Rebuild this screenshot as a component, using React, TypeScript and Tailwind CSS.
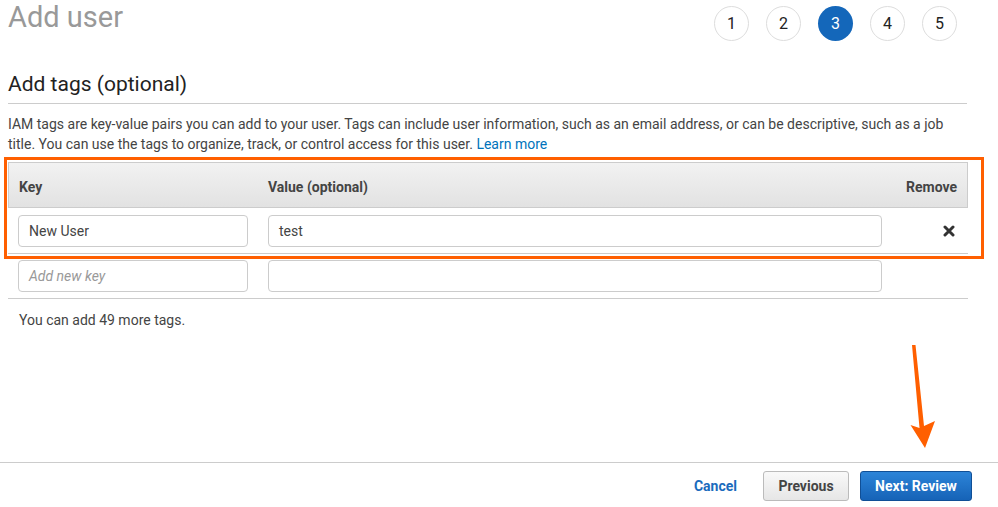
import React from "react";

const steps = [1, 2, 3, 4, 5];

export default function App() {
  return (
    <div
      className="relative w-[998px] h-[507px] overflow-hidden bg-white text-[#444]"
      style={{ fontFamily: "Roboto, 'Helvetica Neue', Arial, sans-serif" }}
    >
      <div className="pl-[8px] w-[967px]">
        {/* Title row */}
        <div className="flex items-start justify-between h-[41px]">
          <h1 className="text-[29px] leading-[30px] mt-[2px] text-[#999] font-normal">Add user</h1>
          <div className="flex gap-[17px] mt-[6px] mr-[10px]">
            {steps.map((s) =>
              s === 3 ? (
                <div
                  key={s}
                  className="w-[35px] h-[35px] rounded-full bg-[#1467ba] text-white flex items-center justify-center text-[16px]"
                >
                  {s}
                </div>
              ) : (
                <div
                  key={s}
                  className="w-[35px] h-[35px] rounded-full border border-[#dddddd] bg-white text-[#222] flex items-center justify-center text-[16px]"
                >
                  {s}
                </div>
              )
            )}
          </div>
        </div>

        {/* Section header */}
        <h2 className="mt-[29px] text-[21px] leading-[28px] pb-[5px] border-b border-[#cccccc] text-[#222] font-normal">
          Add tags (optional)
        </h2>

        <p className="mt-[10px] text-[14px] leading-[20px] text-[#444] pr-[10px]">
          IAM tags are key-value pairs you can add to your user. Tags can include user information, such as an email address, or can be descriptive, such as a job title. You can use the tags to organize, track, or control access for this user.{" "}
          <span className="text-[#0073bb]">Learn more</span>
        </p>

        {/* Table */}
        <div className="mt-[8px] w-[960px]">
          <div className="flex items-center h-[46px] border border-[#cccccc] bg-gradient-to-b from-[#f2f2f2] to-[#e2e2e2] text-[14px] font-bold text-[#444]">
            <div className="w-[250px] pl-[10px] pt-[4px]">Key</div>
            <div className="flex-1 pl-[9px] pt-[4px]">Value (optional)</div>
            <div className="w-[90px] text-right pr-[10px] pt-[4px]">Remove</div>
          </div>
          <div className="flex items-center pt-[7px] pb-[6px] border-b border-[#cccccc]">
            <div className="w-[250px] pl-[10px]">
              <div className="w-[230px] h-[32px] border border-[#cccccc] rounded-[4px] flex items-center px-[10px] text-[14px] text-[#444]">
                New User
              </div>
            </div>
            <div className="pl-[10px]">
              <div className="w-[614px] h-[32px] border border-[#cccccc] rounded-[4px] flex items-center px-[10px] text-[14px] text-[#444]">
                test
              </div>
            </div>
            <div className="flex-1 flex justify-end pr-[13px]">
              <svg width="12" height="12" viewBox="0 0 12 12">
                <path d="M2 2 L10 10 M10 2 L2 10" stroke="#333" strokeWidth="3" strokeLinecap="round" />
              </svg>
            </div>
          </div>
          <div className="flex items-center pt-[6px] pb-[6px] border-b border-[#cccccc]">
            <div className="w-[250px] pl-[10px]">
              <div className="w-[230px] h-[32px] border border-[#cccccc] rounded-[4px] flex items-center px-[10px] text-[14px] italic text-[#999]">
                Add new key
              </div>
            </div>
            <div className="pl-[10px]">
              <div className="w-[614px] h-[32px] border border-[#cccccc] rounded-[4px]" />
            </div>
          </div>
          <p className="pl-[11px] mt-[11px] text-[14px] leading-[20px] text-[#444]">You can add 49 more tags.</p>
        </div>
      </div>

      {/* Footer */}
      <div className="absolute left-0 right-0 top-[462px] border-t border-[#cccccc]">
        <div className="flex items-center justify-end h-[46px] pr-[26px]">
          <span className="text-[14px] font-bold text-[#1a6bbd] mr-[26px]">Cancel</span>
          <button className="w-[86px] h-[30px] rounded-[3px] border border-[#bbbbbb] bg-gradient-to-b from-[#f9f9f9] to-[#e6e6e6] text-[14px] font-bold text-[#444] mr-[11px]">
            Previous
          </button>
          <button className="w-[112px] h-[30px] rounded-[3px] border border-[#104f96] bg-gradient-to-b from-[#2c84d8] to-[#1663b7] text-[14px] font-bold text-white">
            Next: Review
          </button>
        </div>
      </div>

      {/* Orange annotation box */}
      <div className="absolute left-[4px] top-[157px] w-[980px] h-[102px] border-[3px] border-[#ff5f00] pointer-events-none" />

      {/* Orange arrow */}
      <svg className="absolute left-0 top-0 pointer-events-none" width="998" height="507">
        <path d="M912 345 L915.5 345 L924 426 L935 421 L925 448 L910.5 425 L919.5 428 Z" fill="#ff5f00" />
      </svg>
    </div>
  );
}
